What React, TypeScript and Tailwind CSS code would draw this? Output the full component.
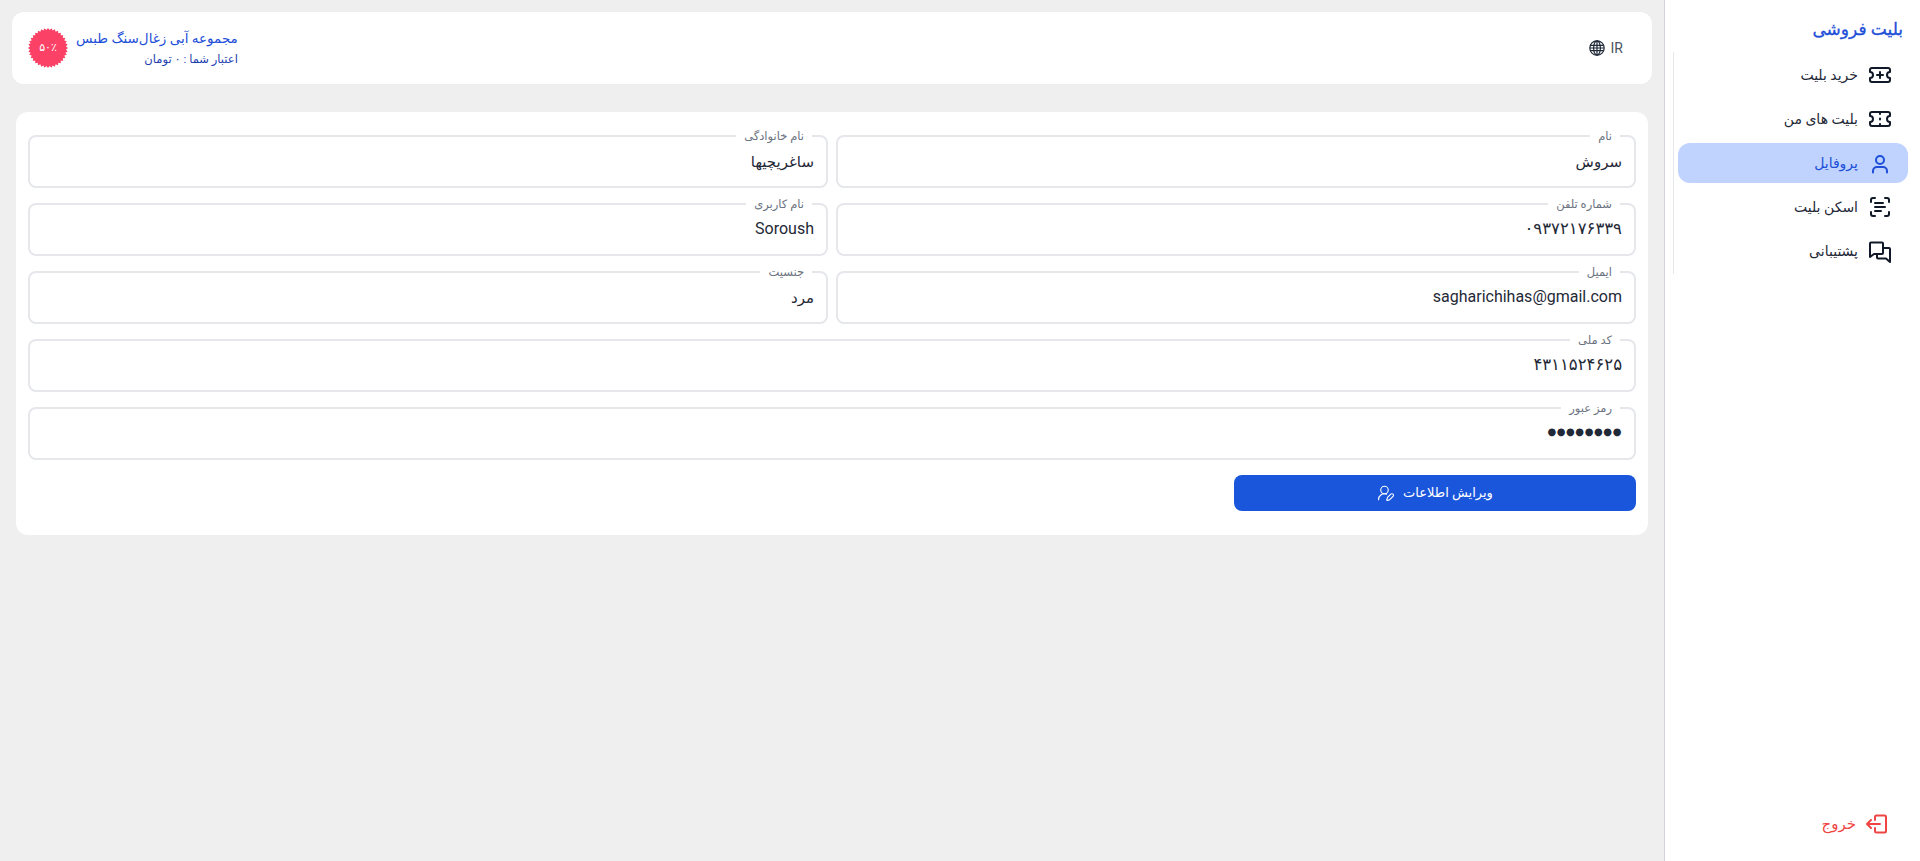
import { ScanText, TicketPlus, UserRoundPen } from "lucide-react";

const FONT = "font-['Roboto','Noto_Sans','DejaVu_Sans',sans-serif]";

// starburst outline for the discount badge
const burst = Array.from({ length: 72 }, (_, i) => {
  const r = i % 2 === 0 ? 20 : 18;
  const a = (i / 72) * Math.PI * 2;
  return `${20 + r * Math.cos(a)},${20 + r * Math.sin(a)}`;
}).join(" ");

function TicketIcon() {
  return (
    <svg width="24" height="24" viewBox="0 0 24 24" fill="none" stroke="currentColor" strokeWidth="2" strokeLinecap="round" strokeLinejoin="round">
      <path d="M2 9a3 3 0 0 1 0 6v2a2 2 0 0 0 2 2h16a2 2 0 0 0 2-2v-2a3 3 0 0 1 0-6V7a2 2 0 0 0-2-2H4a2 2 0 0 0-2 2Z" />
      <path d="M12 6v1M12 11.5v1M12 17v1" />
    </svg>
  );
}

function UserIcon() {
  return (
    <svg width="24" height="24" viewBox="0 0 24 24" fill="none" stroke="currentColor" strokeWidth="2" strokeLinecap="round" strokeLinejoin="round">
      <circle cx="12" cy="9" r="4" />
      <path d="M5 21.5V20a4 4 0 0 1 4-4h6a4 4 0 0 1 4 4v1.5" />
    </svg>
  );
}

function ChatIcon() {
  return (
    <svg width="24" height="24" viewBox="0 0 24 24" fill="none" stroke="currentColor" strokeWidth="2" strokeLinecap="round" strokeLinejoin="round">
      <path d="M2 18V4.5A1 1 0 0 1 3 3.5h11a1 1 0 0 1 1 1V14a1 1 0 0 1-1 1H6Z" />
      <path d="M15 9h6a1 1 0 0 1 1 1v13l-4-3.5h-8a1 1 0 0 1-1-1V15" />
    </svg>
  );
}

function ExitIcon() {
  return (
    <svg width="24" height="24" viewBox="0 0 24 24" fill="none" stroke="currentColor" strokeWidth="2" strokeLinecap="round" strokeLinejoin="round">
      <path d="M10 8V5a1.5 1.5 0 0 1 1.5-1.5h8A1.5 1.5 0 0 1 21 5v14a1.5 1.5 0 0 1-1.5 1.5h-8A1.5 1.5 0 0 1 10 19v-3" />
      <path d="M15 12H2M6 8l-4 4 4 4" />
    </svg>
  );
}

function Field({ label, value, size = "fa" }: { label: string; value: string; size?: "fa" | "en" | "num" | "dots" }) {
  return (
    <fieldset className="h-[59px] min-w-0 rounded-lg border-2 border-[#e5e7eb] px-3">
      <legend className="mr-[2px] px-2 text-[11.5px] leading-[14px] text-[#6b7280]">{label}</legend>
      {size === "dots" && (
        <div className="pt-[6px] text-right font-['DejaVu_Sans',sans-serif] text-[10px] leading-[22px] tracking-[0.6px] text-[#1f2937]">●●●●●●●●</div>
      )}
      {size === "fa" && <div className="pt-[7px] text-right text-[15px] leading-[24px] text-[#1f2937]">{value}</div>}
      {size === "en" && <div className="pt-[5.5px] text-right text-[16px] leading-[24px] text-[#1f2937]">{value}</div>}
      {size === "num" && <div className="pt-[5.5px] text-right text-[16.5px] leading-[24px] text-[#1f2937]">{value}</div>}
    </fieldset>
  );
}

function NavItem({ icon, label, active }: { icon: React.ReactNode; label: string; active?: boolean }) {
  return (
    <div
      className={`flex h-10 items-center gap-[10px] rounded-xl px-4 text-[14px] ${
        active ? "bg-[#bfd3fe] text-[#1d4ed8]" : "text-[#1f2937]"
      }`}
    >
      <span className={`flex h-6 w-6 items-center justify-center ${active ? "text-[#1d4ed8]" : "text-[#111827]"}`}>{icon}</span>
      <span>{label}</span>
    </div>
  );
}

export default function App() {
  return (
    <div dir="rtl" className={`flex h-[861px] w-[1920px] overflow-hidden bg-[#efefef] ${FONT}`}>
      {/* Sidebar */}
      <aside className="flex h-full w-[256px] shrink-0 flex-col justify-between border-l border-[#d1d5db] bg-white pb-[25px]">
        <div>
          <h1 className="pt-[17px] pr-[17px] text-[17px] leading-[25px] font-medium text-[#1d4ed8] [-webkit-text-stroke:0.3px_#1d4ed8]">بلیت فروشی</h1>
          <nav className="mt-[10px] ml-[8px] flex flex-col gap-1 border-l border-[#e5e7eb] py-[3px] pr-[12px] pl-[4px]">
            <NavItem icon={<TicketPlus size={24} />} label="خرید بلیت" />
            <NavItem icon={<TicketIcon />} label="بلیت های من" />
            <NavItem icon={<UserIcon />} label="پروفایل" active />
            <NavItem icon={<ScanText size={24} />} label="اسکن بلیت" />
            <NavItem icon={<ChatIcon />} label="پشتیبانی" />
          </nav>
        </div>
        <div className="flex items-center gap-[9px] pr-[31px] text-[15px] font-medium text-[#ef4444]">
          <ExitIcon />
          <span>خروج</span>
        </div>
      </aside>

      {/* Main */}
      <main className="min-w-0 flex-1 p-3">
        <header className="flex h-[72px] items-center justify-between rounded-xl bg-white pr-[29px] pl-[16px]">
          <div dir="ltr" className="flex items-center gap-[6px] text-[14px] text-[#4b5563]">
            <svg width="16" height="16" viewBox="0 0 16 16" fill="none" stroke="#1f2937" strokeWidth="1.2">
              <circle cx="8" cy="8" r="7.2" />
              <ellipse cx="8" cy="8" rx="3.4" ry="7.2" />
              <path d="M8 .8v14.4M1 5.4h14M1 10.6h14M.8 8h14.4" />
            </svg>
            <span>IR</span>
          </div>
          <div dir="ltr" className="flex items-center gap-[8px]">
            <div className="relative flex h-10 w-10 items-center justify-center">
              <svg width="40" height="40" viewBox="0 0 40 40" className="absolute inset-0">
                <polygon points={burst} fill="#fb4166" />
              </svg>
              <span className="relative text-[11px] font-medium text-white">۵۰٪</span>
            </div>
            <div dir="rtl" className="text-right">
              <div className="text-[13.5px] leading-[20px] font-medium text-[#1d4ed8]">مجموعه آبی زغال‌سنگ طبس</div>
              <div className="mt-[2px] text-[11.5px] leading-[18px] text-[#1e40af]">اعتبار شما : ۰ تومان</div>
            </div>
          </div>
        </header>

        <section className="mx-1 mt-7 rounded-xl bg-white px-3 pt-[17px] pb-[24px]">
          <div className="grid grid-cols-2 gap-x-2 gap-y-[9px]">
            <Field label="نام" value="سروش" />
            <Field label="نام خانوادگی" value="ساغریچیها" />
            <Field label="شماره تلفن" value="۰۹۳۷۲۱۷۶۳۳۹" size="num" />
            <Field label="نام کاربری" value="Soroush" size="en" />
            <Field label="ایمیل" value="sagharichihas@gmail.com" size="en" />
            <Field label="جنسیت" value="مرد" />
            <div className="col-span-2">
              <Field label="کد ملی" value="۴۳۱۱۵۲۴۶۲۵" size="num" />
            </div>
            <div className="col-span-2">
              <Field label="رمز عبور" value="" size="dots" />
            </div>
          </div>
          <button className="mt-[15px] flex h-9 w-1/4 items-center justify-center gap-2 rounded-lg bg-[#1a56db] text-[13px] text-white">
            <span>ویرایش اطلاعات</span>
            <UserRoundPen size={18} strokeWidth={1.5} />
          </button>
        </section>
      </main>
    </div>
  );
}
